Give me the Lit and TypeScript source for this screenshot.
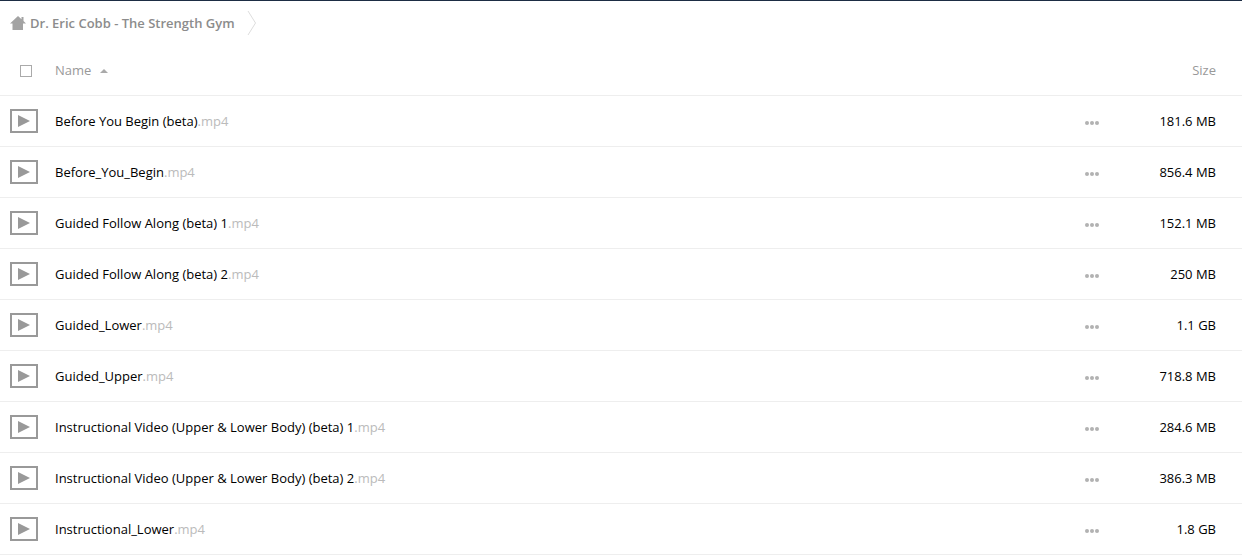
import { LitElement, html, css, svg } from "lit";
import { customElement, state } from "lit/decorators.js";

interface VideoFile {
  name: string;
  ext: string;
  size: string;
}

const FILES: VideoFile[] = [
  { name: "Before You Begin (beta)", ext: ".mp4", size: "181.6 MB" },
  { name: "Before_You_Begin", ext: ".mp4", size: "856.4 MB" },
  { name: "Guided Follow Along (beta) 1", ext: ".mp4", size: "152.1 MB" },
  { name: "Guided Follow Along (beta) 2", ext: ".mp4", size: "250 MB" },
  { name: "Guided_Lower", ext: ".mp4", size: "1.1 GB" },
  { name: "Guided_Upper", ext: ".mp4", size: "718.8 MB" },
  { name: "Instructional Video (Upper & Lower Body) (beta) 1", ext: ".mp4", size: "284.6 MB" },
  { name: "Instructional Video (Upper & Lower Body) (beta) 2", ext: ".mp4", size: "386.3 MB" },
  { name: "Instructional_Lower", ext: ".mp4", size: "1.8 GB" },
];

@customElement("app-root")
export class AppRoot extends LitElement {
  @state() private ascending = true;

  static styles = css`
    :host {
      display: block;
      background: #fff;
      border-top: 1px solid #1d2d44;
      font: 13px/20px "Open Sans", sans-serif;
      color: #000;
    }
    svg { display: block; }
    .crumbs {
      display: flex;
      align-items: center;
      height: 44px;
      padding-left: 10px;
    }
    .crumb {
      display: flex;
      align-items: center;
      gap: 4px;
      color: #8c8c8c;
      font-weight: 600;
      text-decoration: none;
    }
    .chevron { margin-left: 12px; }
    table {
      width: 100%;
      border-collapse: separate;
      border-spacing: 0;
      table-layout: fixed;
    }
    th, td {
      height: 50px;
      padding: 0;
      border-bottom: 1px solid #eee;
      text-align: left;
      font-weight: 400;
    }
    th { color: #999; }
    .pick { width: 55px; }
    .pick input {
      appearance: none;
      display: block;
      box-sizing: border-box;
      width: 12px;
      height: 12px;
      margin: 2px 0 0 20px;
      border: 1px solid #aaa;
      background: #fff;
    }
    .pick input:checked { background: #999; }
    .icon { padding-left: 10px; }
    .sort {
      display: flex;
      align-items: center;
      gap: 9px;
      padding: 0;
      border: 0;
      background: none;
      color: inherit;
      font: inherit;
    }
    .arrow { margin-top: 2px; }
    .ext { color: #bbb; }
    .actions { width: 40px; }
    .more {
      display: block;
      padding: 8px 0 4px;
      border: 0;
      background: none;
    }
    .size {
      width: 91px;
      padding-right: 26px;
      text-align: right;
    }
  `;

  private toggleSort() {
    this.ascending = !this.ascending;
  }

  render() {
    const files = this.ascending ? FILES : [...FILES].reverse();
    return html`
      <nav class="crumbs" aria-label="Breadcrumb">
        <a class="crumb" href="#">
          <svg width="16" height="14" viewBox="0 0 16 14" fill="#a3a3a3" aria-hidden="true">
            <path d="M8 0 0 7.5h2.5V14h10.5V7.5H16l-2.5-2.4V1h-2v2.2z" />
          </svg>
          <span>Dr. Eric Cobb - The Strength Gym</span>
        </a>
        <svg class="chevron" width="10" height="26" viewBox="0 0 10 26" fill="none" stroke="#ddd" aria-hidden="true">
          <path d="M1 1 8.5 13 1 25" />
        </svg>
      </nav>
      <table>
        <thead>
          <tr>
            <th class="pick"><input type="checkbox" aria-label="Select all" /></th>
            <th>
              <button class="sort" @click=${this.toggleSort}>
                Name
                <svg class="arrow" width="8" height="4" viewBox="0 0 8 4" fill="#aaa" aria-hidden="true">
                  ${this.ascending ? svg`<path d="M0 4 4 0l4 4z" />` : svg`<path d="M0 0l4 4 4-4z" />`}
                </svg>
              </button>
            </th>
            <th class="actions"></th>
            <th class="size">Size</th>
          </tr>
        </thead>
        <tbody>
          ${files.map(
            (f) => html`
              <tr>
                <td class="icon">
                  <svg width="28" height="24" viewBox="0 0 28 24" aria-hidden="true">
                    <rect x="1" y="1" width="26" height="22" fill="none" stroke="#999" stroke-width="2" />
                    <path d="M8 6v12l12-6z" fill="#999" />
                  </svg>
                </td>
                <td>${f.name}<span class="ext">${f.ext}</span></td>
                <td>
                  <button class="more" aria-label="More actions">
                    <svg width="14" height="4" viewBox="0 0 14 4" fill="#b2b2b2" aria-hidden="true">
                      <circle cx="2" cy="2" r="2" /><circle cx="7" cy="2" r="2" /><circle cx="12" cy="2" r="2" />
                    </svg>
                  </button>
                </td>
                <td class="size">${f.size}</td>
              </tr>
            `
          )}
        </tbody>
      </table>
    `;
  }
}
